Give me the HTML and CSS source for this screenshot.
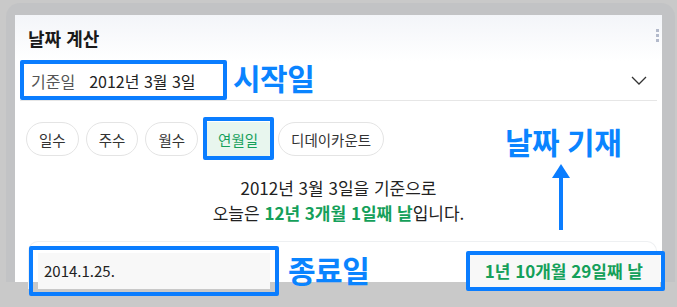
FILE: index.html
```html
<!DOCTYPE html>
<html lang="ko">
<head>
    <meta charset="UTF-8">
    <title>날짜 계산</title>
    <link rel="stylesheet" href="styles.css">
</head>
<body>
    <div class="frame">
        <div class="card">
            <div class="card-header">
                <h1>날짜 계산</h1>
                <span class="more"><i></i><i></i><i></i></span>
            </div>

            <div class="select-row">
                <span class="select-label">기준일</span>
                <span class="select-value">2012년 3월 3일</span>
                <svg class="chevron" width="16" height="9" viewBox="0 0 16 9">
                    <polyline points="1,1 8,8 15,1" fill="none" stroke="#333" stroke-width="1.3"/>
                </svg>
            </div>

            <div class="tabs">
                <button class="tab">일수</button>
                <button class="tab">주수</button>
                <button class="tab">월수</button>
                <button class="tab active">연월일</button>
                <button class="tab">디데이카운트</button>
            </div>

            <div class="result">
                <p>2012년 3월 3일을 기준으로</p>
                <p>오늘은 <b>12년</b> <b>3개월</b> <b>1일째</b> <b>날</b>입니다.</p>
            </div>

            <div class="bottom">
                <div class="end-input">2014.1.25.</div>
                <div class="end-result">1년 10개월 29일째 날</div>
            </div>
        </div>
    </div>

    <!-- annotations drawn over the screenshot -->
    <div class="mark mark-start"></div>
    <div class="mark mark-tab"></div>
    <div class="mark mark-end"></div>
    <div class="mark mark-result"></div>
    <div class="note note-start">시작일</div>
    <div class="note note-date">날짜 기재</div>
    <div class="note note-end">종료일</div>
    <div class="arrow"></div>
</body>
</html>
```

FILE: styles.css
```css
body {
    margin: 0;
    background: #c9c9c9;
    font-family: "Noto Sans CJK KR", "Noto Sans", sans-serif;
    color: #222;
    height: 307px;
    overflow: hidden;
    position: relative;
}

.frame {
    margin: 3px 2px 0 6px;
    padding: 12px 13px 0 9px;
    background: #c2c3c5;
    border-radius: 14px 14px 0 0;
}

.card {
    background: #fff;
    height: 267px;
}

.card-header {
    height: 46px;
    display: flex;
    align-items: center;
    justify-content: space-between;
    padding: 0 3px 0 13px;
    background: linear-gradient(#f3f5f9, #fff);
}

.card-header h1 {
    margin: 0;
    font-size: 18px;
    font-weight: bold;
    line-height: 1;
    color: #1a1a1a;
}

.more {
    display: flex;
    flex-direction: column;
    gap: 2px;
    margin-top: -6px;
}

.more i {
    width: 3px;
    height: 3px;
    background: #b3bacb;
}

.select-row {
    height: 39px;
    margin: 0 5px;
    border-bottom: 1px solid #e6e6e6;
    display: flex;
    align-items: center;
    padding-left: 11px;
    font-size: 16px;
}

.select-label {
    color: #555;
    margin-right: 14px;
}

.select-value {
    color: #222;
}

.chevron {
    margin-left: auto;
    margin-right: 10px;
}

.tabs {
    display: flex;
    gap: 7px;
    padding: 21px 0 0 11px;
}

.tab {
    height: 34px;
    padding: 0 12px;
    border: 1px solid #e4e4e4;
    border-radius: 17px;
    background: #fff;
    font-family: inherit;
    font-size: 14.5px;
    color: #333;
}

.tab.active {
    background: #e8f6ee;
    border-color: #e8f6ee;
    border-radius: 3px;
    color: #14a05a;
}

.result {
    margin-top: 19px;
    text-align: center;
    font-size: 17px;
    line-height: 25px;
    color: #222;
}

.result p {
    margin: 0;
}

.result b {
    color: #14a05a;
}

.bottom {
    margin: 16px 5px 0 13px;
    padding: 11px 0 0 9px;
    border: 1px solid #eef0f2;
    border-bottom: none;
    border-radius: 10px 10px 0 0;
    display: flex;
    justify-content: space-between;
    align-items: flex-start;
}

.end-input {
    width: 226px;
    height: 36px;
    line-height: 36px;
    padding-left: 6px;
    background: #f8f8f8;
    font-size: 15px;
    color: #222;
}

.end-result {
    margin: 1px -4px 0 0;
    padding: 0 17px;
    height: 34px;
    line-height: 34px;
    background: #f8f8f8;
    font-size: 17px;
    font-weight: bold;
    color: #14a05a;
}

/* annotations */
.mark {
    position: absolute;
    border: 4px solid #0a7dff;
    border-radius: 2px;
    box-sizing: border-box;
}

.mark-start { left: 20px; top: 60px; width: 207px; height: 40px; }
.mark-tab { left: 203px; top: 117px; width: 71px; height: 43px; }
.mark-end { left: 29px; top: 246px; width: 250px; height: 50px; }
.mark-result { left: 466px; top: 251px; width: 199px; height: 40px; }

.note {
    position: absolute;
    font-size: 30px;
    font-weight: bold;
    line-height: 1;
    color: #0a84ff;
    letter-spacing: -0.5px;
}

.note-start { left: 233px; top: 62px; }
.note-date { left: 505px; top: 126px; }
.note-end { left: 288px; top: 254px; }

.arrow {
    position: absolute;
    left: 559px;
    top: 176px;
    width: 4px;
    height: 54px;
    background: #0a7dff;
}

.arrow::before {
    content: "";
    position: absolute;
    left: -7px;
    top: -12px;
    border-left: 9px solid transparent;
    border-right: 9px solid transparent;
    border-bottom: 14px solid #0a7dff;
}
```
